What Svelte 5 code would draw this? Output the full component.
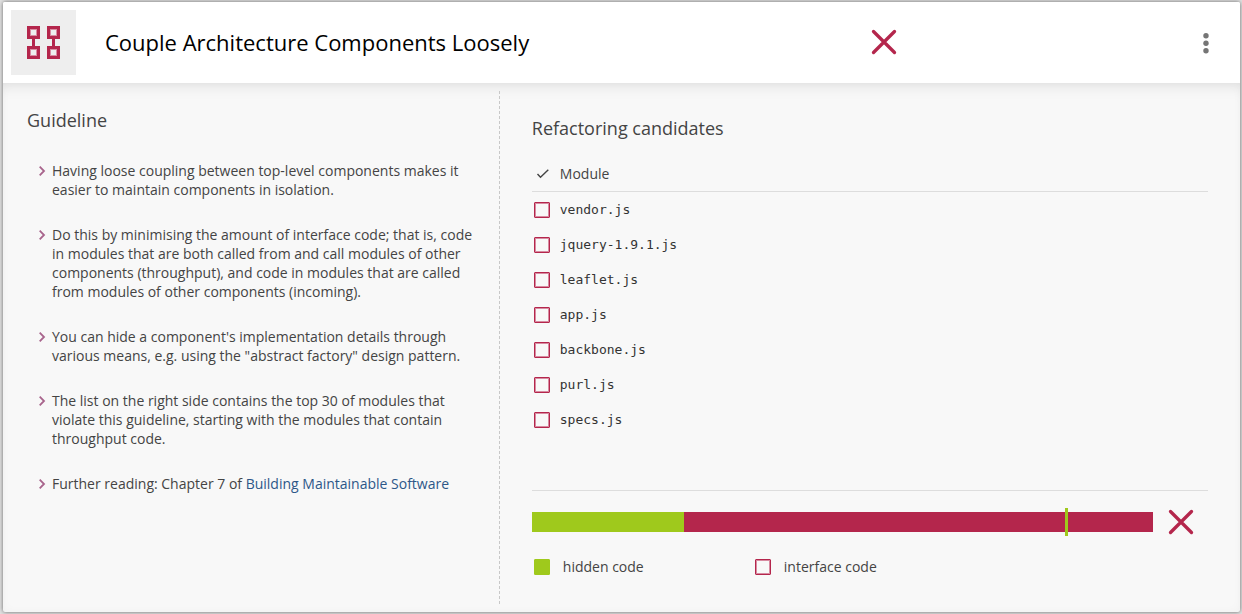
<script>
  const modules = ['vendor.js', 'jquery-1.9.1.js', 'leaflet.js', 'app.js', 'backbone.js', 'purl.js', 'specs.js'];
  const guidelines = [
    'Having loose coupling between top-level components makes it easier to maintain components in isolation.',
    'Do this by minimising the amount of interface code; that is, code in modules that are both called from and call modules of other components (throughput), and code in modules that are called from modules of other components (incoming).',
    'You can hide a component\'s implementation details through various means, e.g. using the "abstract factory" design pattern.',
    'The list on the right side contains the top 30 of modules that violate this guideline, starting with the modules that contain throughput code.'
  ];
  const hidden = 24.5;
  const threshold = 85.8;
</script>

{#snippet chevron()}
  <svg class="chevron" width="8" height="19" viewBox="0 0 8 19" aria-hidden="true">
    <path d="M1.7 5.7 6 10 1.7 14.3" fill="none" stroke="#a8648c" stroke-width="1.8" />
  </svg>
{/snippet}

{#snippet cross()}
  <svg width="30" height="30" viewBox="0 0 30 30" role="img" aria-label="Not compliant">
    <path d="M4.5 4.5 25.5 25.5M25.5 4.5 4.5 25.5" fill="none" stroke="#b4264c" stroke-width="3.3" stroke-linecap="round" />
  </svg>
{/snippet}

<main class="card">
  <header>
    <div class="heading">
      <div class="tile">
        <svg width="33" height="33" viewBox="0 0 33 33" aria-hidden="true">
          <g fill="none" stroke="#b4264c" stroke-width="3">
            <rect x="1.5" y="1.5" width="10" height="10" />
            <rect x="21.5" y="1.5" width="10" height="10" />
            <rect x="1.5" y="21.5" width="10" height="10" />
            <rect x="21.5" y="21.5" width="10" height="10" />
            <path d="M6.5 12v9M26.5 12v9" />
          </g>
          <g fill="none" stroke="#d98ca2" stroke-width="1">
            <rect x="3.5" y="3.5" width="6" height="6" />
            <rect x="23.5" y="3.5" width="6" height="6" />
            <rect x="3.5" y="23.5" width="6" height="6" />
            <rect x="23.5" y="23.5" width="6" height="6" />
          </g>
        </svg>
      </div>
      <h1>Couple Architecture Components Loosely</h1>
    </div>
    <div class="status">{@render cross()}</div>
    <button class="menu" aria-label="More options">
      <svg width="6" height="22" viewBox="0 0 6 22" fill="#757575" aria-hidden="true">
        <circle cx="3" cy="3.8" r="2.7" /><circle cx="3" cy="11.3" r="2.7" /><circle cx="3" cy="18.8" r="2.7" />
      </svg>
    </button>
  </header>

  <div class="body">
    <section class="guideline">
      <h2>Guideline</h2>
      <ul>
        {#each guidelines as text}
          <li>{@render chevron()}<span>{text}</span></li>
        {/each}
        <li>{@render chevron()}<span>Further reading: Chapter 7 of <a href="#book">Building Maintainable Software</a></span></li>
      </ul>
    </section>

    <section class="candidates">
      <h2>Refactoring candidates</h2>
      <div class="list">
        <table>
          <thead>
            <tr>
              <th class="tick">
                <svg width="14" height="12" viewBox="0 0 14 12" role="img" aria-label="Done">
                  <path d="M1.5 6 4.5 9.3 12.3 1.8" fill="none" stroke="#444" stroke-width="1.4" />
                </svg>
              </th>
              <th>Module</th>
            </tr>
          </thead>
          <tbody>
            {#each modules as name, i}
              <tr>
                <td class="tick"><input type="checkbox" id="module-{i}" /></td>
                <td><label for="module-{i}">{name}</label></td>
              </tr>
            {/each}
          </tbody>
        </table>
      </div>
      <div class="result">
        <div class="bar">
          <div class="hidden" style="width: {hidden}%"></div>
          <div class="marker" style="left: {threshold}%"></div>
        </div>
        {@render cross()}
      </div>
      <div class="legend">
        <div><span class="swatch filled"></span>hidden code</div>
        <div><span class="swatch"></span>interface code</div>
      </div>
    </section>
  </div>
</main>

<style>
  :global(body) {
    background: #e2e2e2;
  }
  .card, .card * {
    box-sizing: border-box;
  }
  .card {
    display: flex;
    flex-direction: column;
    min-height: calc(100vh - 4px);
    margin: 2px 2px 2px 3px;
    border-radius: 2px;
    background: #f8f8f8;
    box-shadow: 0 0 4px rgba(0, 0, 0, 0.55);
    color: #444;
    font: 14px/19px "Open Sans", "Noto Sans", sans-serif;
  }
  header {
    display: grid;
    grid-template-columns: 70% 1fr auto;
    align-items: center;
    padding: 8px 0;
    border-radius: 2px 2px 0 0;
    background: #fff;
  }
  .heading {
    display: flex;
    align-items: center;
    gap: 29px;
    padding-left: 8px;
  }
  .tile {
    display: grid;
    place-items: center;
    width: 65px;
    height: 65px;
    background: #eee;
  }
  h1, h2 {
    margin: 0;
    font-weight: 400;
  }
  h1, .status {
    padding-bottom: 2px;
  }
  h1 {
    color: #000;
    font-size: 22px;
    line-height: 28px;
  }
  h2 {
    font-size: 18px;
    line-height: 24px;
  }
  svg {
    display: block;
    flex: none;
  }
  .menu {
    display: grid;
    place-items: center;
    width: 30px;
    height: 40px;
    margin-right: 19px;
    padding: 0;
    border: 0;
    background: none;
  }
  .body {
    display: flex;
    flex: 1;
    padding: 8px 0;
    box-shadow: inset 0 14px 16px -12px rgba(0, 0, 0, 0.1), inset 0 0 10px rgba(0, 0, 0, 0.03);
  }
  .guideline {
    flex: 0 0 calc(40% + 2px);
    padding: 17px 20px 0 24px;
    border-right: 1px dashed #c8c8c8;
  }
  ul {
    display: grid;
    gap: 26px;
    margin: 29px 0 0;
    padding: 0 0 0 11px;
    list-style: none;
  }
  li {
    display: flex;
    gap: 6px;
  }
  a {
    color: #2d5788;
    text-decoration: none;
  }
  .candidates {
    flex: 1;
    padding: 25px 32px 16px;
  }
  .list {
    min-height: 351px;
    padding-top: 16px;
    border-bottom: 1px solid #ddd;
  }
  table {
    width: 100%;
    border-spacing: 0;
  }
  th {
    height: 36px;
    padding: 0;
    border-bottom: 1px solid #ddd;
    font-weight: 400;
    text-align: left;
  }
  td {
    height: 35px;
    padding: 0;
    color: #333;
    font: 13px/19px "DejaVu Sans Mono", monospace;
  }
  .tick {
    width: 28px;
  }
  th.tick {
    padding-left: 4px;
  }
  input, .swatch {
    display: block;
    width: 16px;
    height: 16px;
    margin: 0 0 0 2px;
    border: 1px solid #b4264c;
    border-radius: 1px;
    box-shadow: inset 0 0 0 1px #d88ba1;
    appearance: none;
  }
  .swatch.filled {
    border-color: #9fc91c;
    background: #9fc91c;
    box-shadow: none;
  }
  .result {
    display: flex;
    align-items: center;
    gap: 13px;
    margin-top: 16px;
    padding-right: 12px;
  }
  .bar {
    position: relative;
    flex: 1;
    height: 20px;
    background: #b4264c;
  }
  .hidden {
    height: 100%;
    background: #9fc91c;
  }
  .marker {
    position: absolute;
    top: -4px;
    bottom: -4px;
    width: 3px;
    background: #9fc91c;
  }
  .legend {
    display: flex;
    margin-top: 20px;
  }
  .legend div {
    display: flex;
    align-items: center;
    gap: 13px;
    min-width: 221px;
  }
</style>
